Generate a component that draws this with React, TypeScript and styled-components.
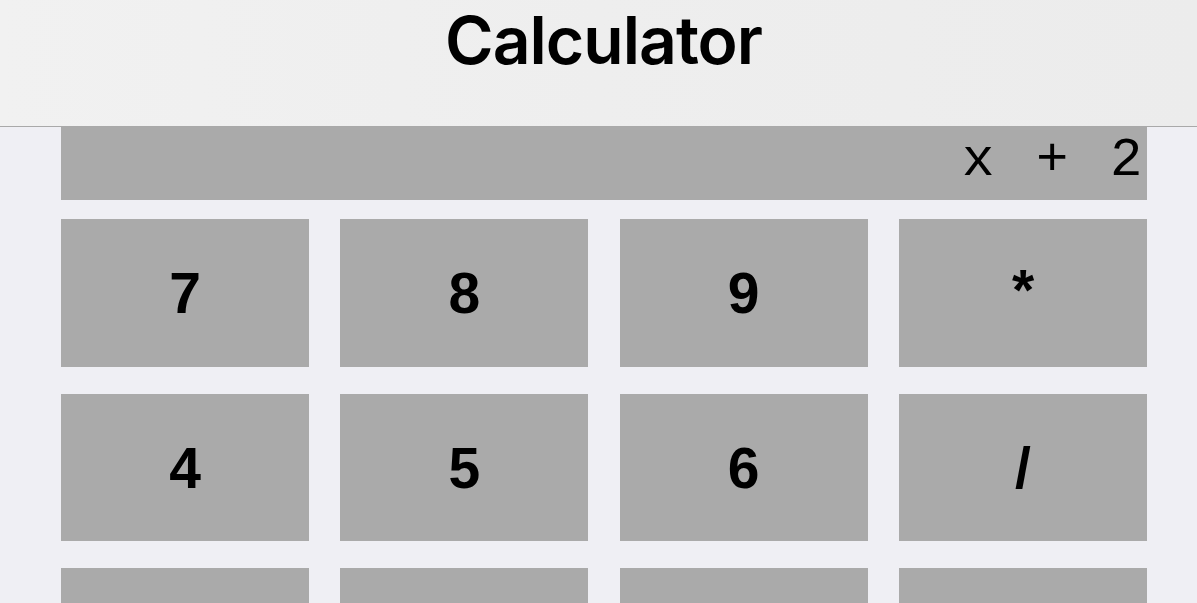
import React from "react";
import styled, { createGlobalStyle } from "styled-components";

const Global = createGlobalStyle`
  html, body {
    margin: 0;
    padding: 0;
    background: #efeff4;
    overflow: hidden;
    height: 603px;
  }
  * { box-sizing: border-box; }
`;

const Page = styled.div`
  width: 1197px;
  height: 603px;
  overflow: hidden;
  background: #efeff4;
  font-family: "Liberation Sans", Arial, sans-serif;
`;

const Header = styled.header`
  height: 127px;
  padding-left: 10px;
  background: linear-gradient(90deg, #f1f1f1 0%, #eeeeee 50%, #ececec 100%);
  border-bottom: 1px solid #a9a9a9;
  display: flex;
  justify-content: center;
  align-items: flex-start;
`;

const Title = styled.h1`
  margin: 0;
  padding-top: 0;
  font-family: Inter, "Liberation Sans", Arial, sans-serif;
  font-weight: 600;
  font-size: 66px;
  line-height: 80px;
  letter-spacing: -1px;
  color: #000;
`;

const Main = styled.main`
  padding: 0 50px 0 61px;
  display: flex;
  flex-direction: column;
`;

const Display = styled.div`
  height: 73px;
  background: #aaaaaa;
  display: flex;
  justify-content: flex-end;
  align-items: flex-start;
  font-family: "Liberation Mono", "Courier New", monospace;
  font-size: 54px;
  line-height: 54px;
  letter-spacing: 4.6px;
  padding-top: 7px;
  color: #000;
  white-space: pre;
  margin-bottom: 19px;
`;

const Keypad = styled.div`
  display: grid;
  grid-template-columns: repeat(4, 248px);
  grid-auto-rows: 147.7px;
  column-gap: 31px;
  row-gap: 27px;
  justify-content: space-between;
`;

const Key = styled.button<{ $raise?: boolean }>`
  border: none;
  border-radius: 0;
  background: #aaaaaa;
  padding: 0;
  margin: 0;
  display: flex;
  align-items: center;
  justify-content: center;
  font-family: "Liberation Sans", Arial, sans-serif;
  font-weight: 700;
  font-size: 57px;
  color: #000;
  cursor: pointer;
  span {
    display: block;
    transform: translateY(${(p) => (p.$raise ? "-3px" : "0")});
  }
`;

const keys = ["7", "8", "9", "*", "4", "5", "6", "/", "1", "2", "3", "-", "0", ".", "=", "+"];

export default function App() {
  return (
    <Page>
      <Global />
      <Header>
        <Title>Calculator</Title>
      </Header>
      <Main>
        <Display>{"x + 2"}</Display>
        <Keypad>
          {keys.map((k) => (
            <Key key={k} $raise={k === "*"}>
              <span>{k}</span>
            </Key>
          ))}
        </Keypad>
      </Main>
    </Page>
  );
}
